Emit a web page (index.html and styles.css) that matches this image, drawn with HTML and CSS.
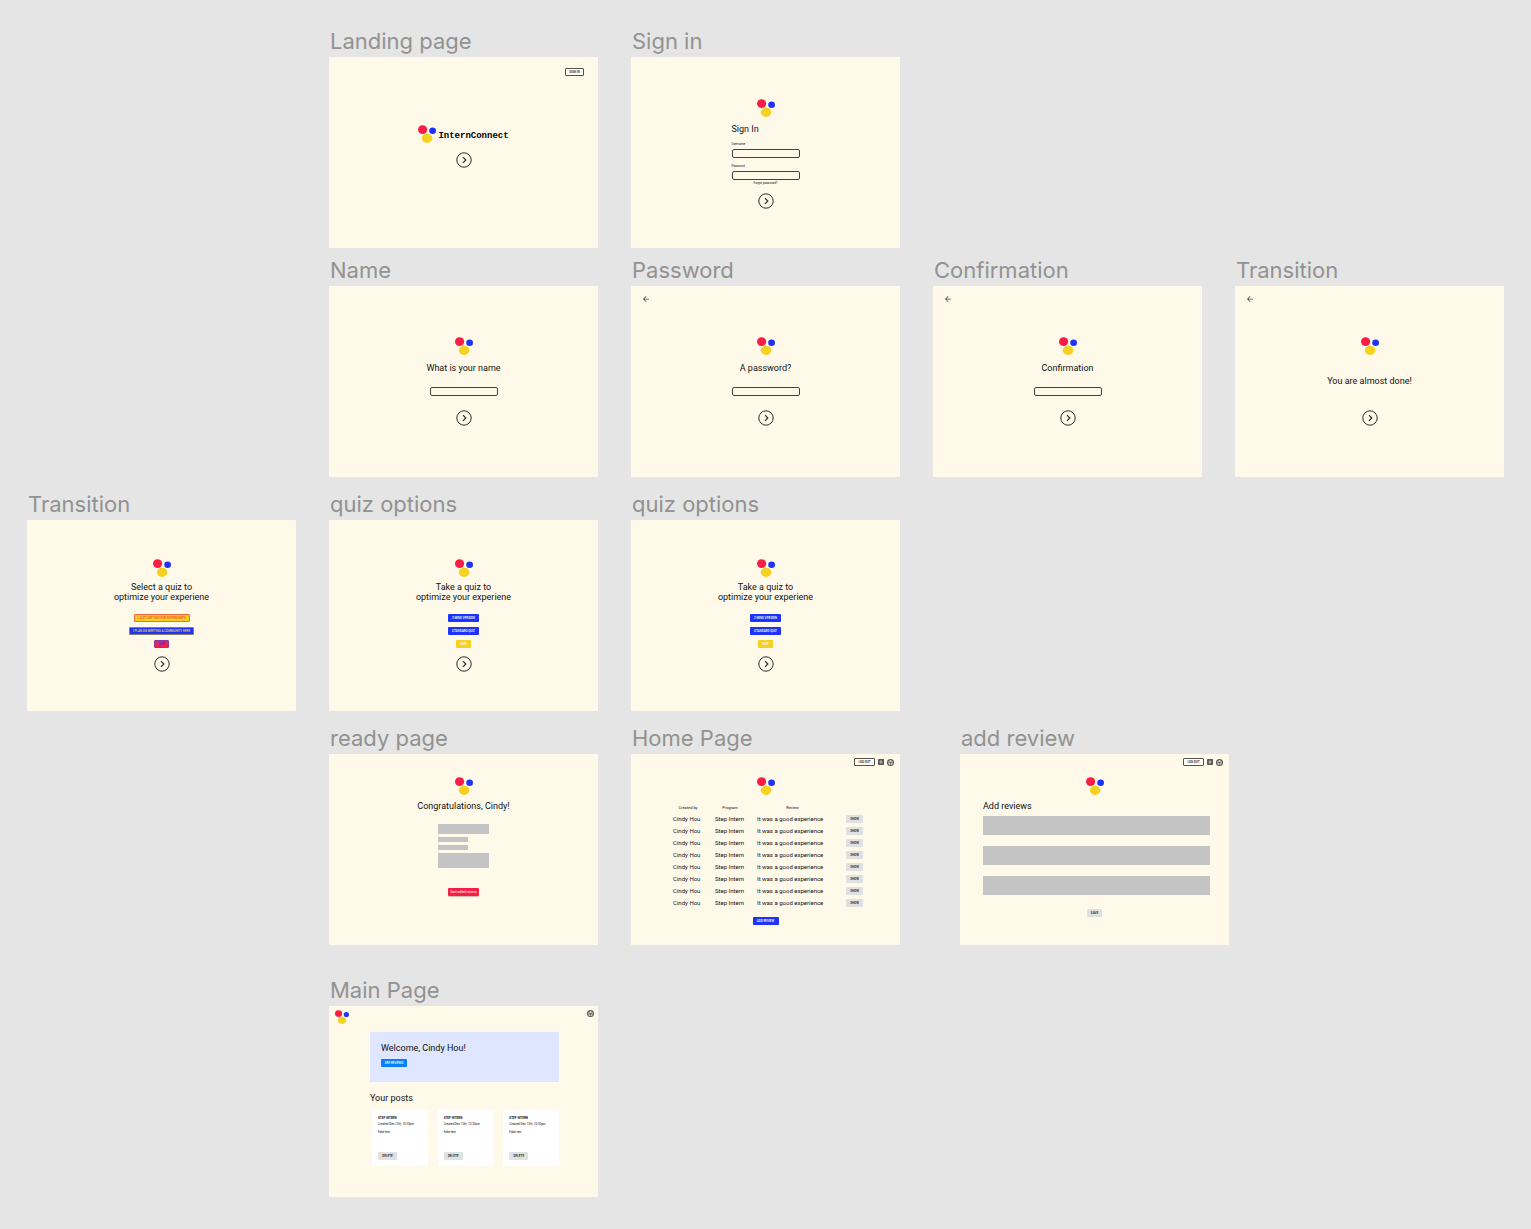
FILE: index.html
```html
<!DOCTYPE html>
<html lang="en">
<head>
<meta charset="utf-8">
<meta name="viewport" content="width=device-width, initial-scale=1">
<title>InternConnect screens</title>
<link rel="stylesheet" href="styles.css">
</head>
<body>
<svg class="sprite" aria-hidden="true">
  <symbol id="logo" viewBox="0 0 18 18">
    <ellipse cx="4.6" cy="4.6" rx="4.6" ry="4.3" fill="#f71e46"/>
    <ellipse cx="14.6" cy="5.8" rx="3.4" ry="3.3" fill="#1d33fb"/>
    <ellipse cx="9.1" cy="13.3" rx="5.3" ry="4.6" fill="#f5d121"/>
  </symbol>
  <symbol id="chevron" viewBox="0 0 16 16">
    <circle cx="8" cy="8" r="7.2" fill="none" stroke="#2e2c29" stroke-width="1"/>
    <path d="M7 5.2 9.8 8 7 10.8" fill="none" stroke="#2e2c29" stroke-width="1.2"/>
  </symbol>
  <symbol id="back" viewBox="4 4 16 16">
    <path d="M20 11H7.83l5.59-5.59L12 4l-8 8 8 8 1.41-1.41L7.83 13H20z" fill="#4a4844"/>
  </symbol>
  <symbol id="add" viewBox="3 3 18 18">
    <path d="M19 3H5a2 2 0 0 0-2 2v14a2 2 0 0 0 2 2h14a2 2 0 0 0 2-2V5a2 2 0 0 0-2-2zm-2 10h-4v4h-2v-4H7v-2h4V7h2v4h4z" fill="#5b5954"/>
  </symbol>
  <symbol id="account" viewBox="2 2 20 20">
    <path fill-rule="evenodd" d="M12 2a10 10 0 1 0 0 20 10 10 0 0 0 0-20zM7.500 8.500a2 2 0 1 1 0 4 2 2 0 0 1 0-4zm9 0a2 2 0 1 1 0 4 2 2 0 0 1 0-4zM12 5a2.500 2.500 0 1 1 0 5 2.500 2.500 0 0 1 0-5zM5 14.500h6v4.500a7.500 7.500 0 0 1-6-4.500zm8 0h6a7.500 7.500 0 0 1-6 4.500z" fill="#5b5954"/>
  </symbol>
</svg>

<main class="canvas">
  <section class="frame frame-landing">
    <h2 class="frame-title">Landing page</h2>
    <div class="screen">
      <header class="topbar topbar-landing"><button class="btn outline w-signin">SIGN IN</button></header>
      <div class="brand"><svg class="logo"><use href="#logo"/></svg><span class="wordmark">InternConnect</span></div>
      <button class="next next-landing" aria-label="Next"><svg><use href="#chevron"/></svg></button>
    </div>
  </section>

  <section class="frame frame-signin">
    <h2 class="frame-title">Sign in</h2>
    <div class="screen signin">
      <svg class="logo"><use href="#logo"/></svg>
      <form class="signin-form">
        <h3 class="heading">Sign In</h3>
        <label class="label" for="user">Username</label>
        <input class="field" id="user" type="text">
        <label class="label" for="pass">Password</label>
        <input class="field" id="pass" type="password">
        <a class="forgot" href="#">Forgot password?</a>
      </form>
      <button class="next next-signin" aria-label="Next"><svg><use href="#chevron"/></svg></button>
    </div>
  </section>

  <section class="frame frame-name">
    <h2 class="frame-title">Name</h2>
    <div class="screen">
      <header class="topbar"></header>
      <svg class="logo"><use href="#logo"/></svg>
      <label class="heading question" for="name">What is your name</label>
      <input class="field" id="name" type="text">
      <button class="next next-step" aria-label="Next"><svg><use href="#chevron"/></svg></button>
    </div>
  </section>

  <section class="frame frame-password">
    <h2 class="frame-title">Password</h2>
    <div class="screen">
      <header class="topbar"><button class="back" aria-label="Back"><svg><use href="#back"/></svg></button></header>
      <svg class="logo"><use href="#logo"/></svg>
      <label class="heading question" for="newpass">A password?</label>
      <input class="field" id="newpass" type="password">
      <button class="next next-step" aria-label="Next"><svg><use href="#chevron"/></svg></button>
    </div>
  </section>

  <section class="frame frame-confirm">
    <h2 class="frame-title">Confirmation</h2>
    <div class="screen">
      <header class="topbar"><button class="back" aria-label="Back"><svg><use href="#back"/></svg></button></header>
      <svg class="logo"><use href="#logo"/></svg>
      <label class="heading question" for="confirm">Confirmation</label>
      <input class="field" id="confirm" type="password">
      <button class="next next-step" aria-label="Next"><svg><use href="#chevron"/></svg></button>
    </div>
  </section>

  <section class="frame frame-almost">
    <h2 class="frame-title">Transition</h2>
    <div class="screen">
      <header class="topbar"><button class="back" aria-label="Back"><svg><use href="#back"/></svg></button></header>
      <svg class="logo"><use href="#logo"/></svg>
      <h3 class="heading almost">You are almost done!</h3>
      <button class="next" aria-label="Next"><svg><use href="#chevron"/></svg></button>
    </div>
  </section>

  <section class="frame frame-select">
    <h2 class="frame-title">Transition</h2>
    <div class="screen quiz">
      <svg class="logo"><use href="#logo"/></svg>
      <h3 class="heading">Select a quiz to<br>optimize your experiene</h3>
      <div class="choices">
        <button class="btn gold w-intern">I JUST USE THIS FOR INTERNSHIPS</button>
        <button class="btn navy w-community">I PLAN ON MEETING A COMMUNITY HERE</button>
        <button class="btn crimson w-skip">SKIP</button>
      </div>
      <button class="next" aria-label="Next"><svg><use href="#chevron"/></svg></button>
    </div>
  </section>

  <section class="frame frame-quiz-a">
    <h2 class="frame-title">quiz options</h2>
    <div class="screen quiz">
      <svg class="logo"><use href="#logo"/></svg>
      <h3 class="heading">Take a quiz to<br>optimize your experiene</h3>
      <div class="choices">
        <button class="btn blue w-quiz">2 MINS VERSION</button>
        <button class="btn blue w-quiz">STANDARD QUIZ</button>
        <button class="btn yellow w-skip">SKIP</button>
      </div>
      <button class="next" aria-label="Next"><svg><use href="#chevron"/></svg></button>
    </div>
  </section>

  <section class="frame frame-quiz-b">
    <h2 class="frame-title">quiz options</h2>
    <div class="screen quiz">
      <svg class="logo"><use href="#logo"/></svg>
      <h3 class="heading">Take a quiz to<br>optimize your experiene</h3>
      <div class="choices">
        <button class="btn blue w-quiz">2 MINS VERSION</button>
        <button class="btn blue w-quiz">STANDARD QUIZ</button>
        <button class="btn yellow w-skip">SKIP</button>
      </div>
      <button class="next" aria-label="Next"><svg><use href="#chevron"/></svg></button>
    </div>
  </section>

  <section class="frame frame-ready">
    <h2 class="frame-title">ready page</h2>
    <div class="screen ready">
      <svg class="logo"><use href="#logo"/></svg>
      <h3 class="heading">Congratulations, Cindy!</h3>
      <div class="summary">
        <div class="block block-head"></div>
        <div class="block block-line"></div>
        <div class="block block-line"></div>
        <div class="block block-body"></div>
      </div>
      <button class="btn red w-quiz">Start added reviews</button>
    </div>
  </section>

  <section class="frame frame-home">
    <h2 class="frame-title">Home Page</h2>
    <div class="screen home">
      <header class="topbar topbar-user">
        <button class="btn outline w-logout">LOG OUT</button>
        <button class="icon icon-add" aria-label="Add"><svg><use href="#add"/></svg></button>
        <button class="icon" aria-label="Account"><svg><use href="#account"/></svg></button>
      </header>
      <svg class="logo"><use href="#logo"/></svg>
      <table class="reviews">
        <thead><tr><th>Created by</th><th>Program</th><th>Review</th><td></td></tr></thead>
        <tbody>
          <tr><td>Cindy Hou</td><td>Step Intern</td><td>It was a good experience</td><td><button class="btn gray w-show">SHOW</button></td></tr>
          <tr><td>Cindy Hou</td><td>Step Intern</td><td>It was a good experience</td><td><button class="btn gray w-show">SHOW</button></td></tr>
          <tr><td>Cindy Hou</td><td>Step Intern</td><td>It was a good experience</td><td><button class="btn gray w-show">SHOW</button></td></tr>
          <tr><td>Cindy Hou</td><td>Step Intern</td><td>It was a good experience</td><td><button class="btn gray w-show">SHOW</button></td></tr>
          <tr><td>Cindy Hou</td><td>Step Intern</td><td>It was a good experience</td><td><button class="btn gray w-show">SHOW</button></td></tr>
          <tr><td>Cindy Hou</td><td>Step Intern</td><td>It was a good experience</td><td><button class="btn gray w-show">SHOW</button></td></tr>
          <tr><td>Cindy Hou</td><td>Step Intern</td><td>It was a good experience</td><td><button class="btn gray w-show">SHOW</button></td></tr>
          <tr><td>Cindy Hou</td><td>Step Intern</td><td>It was a good experience</td><td><button class="btn gray w-show">SHOW</button></td></tr>
        </tbody>
      </table>
      <button class="btn blue w-action">ADD REVIEW</button>
    </div>
  </section>

  <section class="frame frame-add">
    <h2 class="frame-title">add review</h2>
    <div class="screen">
      <header class="topbar topbar-user">
        <button class="btn outline w-logout">LOG OUT</button>
        <button class="icon icon-add" aria-label="Add"><svg><use href="#add"/></svg></button>
        <button class="icon" aria-label="Account"><svg><use href="#account"/></svg></button>
      </header>
      <svg class="logo"><use href="#logo"/></svg>
      <form class="review-form">
        <h3 class="heading">Add reviews</h3>
        <textarea class="block area" aria-label="Program"></textarea>
        <textarea class="block area" aria-label="Experience"></textarea>
        <textarea class="block area" aria-label="Review"></textarea>
      </form>
      <button class="btn gray w-skip">SAVE</button>
    </div>
  </section>

  <section class="frame frame-main">
    <h2 class="frame-title">Main Page</h2>
    <div class="screen">
      <header class="topbar topbar-main">
        <svg class="logo logo-small"><use href="#logo"/></svg>
        <button class="icon" aria-label="Account"><svg><use href="#account"/></svg></button>
      </header>
      <div class="dashboard">
        <div class="banner">
          <h3 class="heading">Welcome, Cindy Hou!</h3>
          <button class="btn azure w-action">SEE REVIEWS</button>
        </div>
        <h3 class="heading posts-title">Your posts</h3>
        <div class="posts">
          <article class="post"><h4>STEP INTERN</h4><p>Created Dec 13th, 10:30pm</p><p class="note">Fake text</p><button class="btn gray w-delete">DELETE</button></article>
          <article class="post"><h4>STEP INTERN</h4><p>Created Dec 13th, 10:30pm</p><p class="note">Fake text</p><button class="btn gray w-delete">DELETE</button></article>
          <article class="post"><h4>STEP INTERN</h4><p>Created Dec 13th, 10:30pm</p><p class="note">Fake text</p><button class="btn gray w-delete">DELETE</button></article>
        </div>
      </div>
    </div>
  </section>
</main>
</body>
</html>
```
FILE: styles.css
```css
* { box-sizing: border-box; }
body { margin: 0; background: #e5e5e5; font-family: Roboto, "Liberation Sans", sans-serif; color: #111; }
h2, h3, h4, p { margin: 0; font-weight: 400; }
button { border: 0; padding: 0; background: none; color: inherit; font-family: inherit; cursor: pointer; }
svg { display: block; }
.sprite { display: none; }

/* Free canvas: each frame is pinned at its own place */
.canvas { position: relative; min-height: 100vh; }
.frame { position: absolute; width: 269px; }
.frame-title { height: 32px; padding-left: 1px; line-height: 32px; font-family: Inter, sans-serif; font-size: 22px; color: #929292; white-space: nowrap; }
.frame-landing { left: 329px; top: 25px; }
.frame-signin { left: 631px; top: 25px; }
.frame-name { left: 329px; top: 254px; }
.frame-password { left: 631px; top: 254px; }
.frame-confirm { left: 933px; top: 254px; }
.frame-almost { left: 1235px; top: 254px; }
.frame-select { left: 27px; top: 488px; }
.frame-quiz-a { left: 329px; top: 488px; }
.frame-quiz-b { left: 631px; top: 488px; }
.frame-ready { left: 329px; top: 722px; }
.frame-home { left: 631px; top: 722px; }
.frame-add { left: 960px; top: 722px; }
.frame-main { left: 329px; top: 974px; }

.screen { display: flex; flex-direction: column; align-items: center; min-height: 191px; background: #fff9e9; }
.logo { width: 18px; height: 18px; flex: none; }
.heading { font-size: 9px; line-height: 10px; text-align: center; white-space: nowrap; }

/* Top bars */
.topbar { display: flex; align-items: center; align-self: stretch; height: 26px; margin-bottom: 25px; padding: 0 12px; }
.topbar-landing { height: 30px; margin-bottom: 38px; padding: 0 14px; justify-content: flex-end; }
.topbar-user { height: 16px; margin-bottom: 7px; padding: 0 6px; gap: 3px; justify-content: flex-end; }
.topbar-main { height: 26px; margin-bottom: 0; padding: 4px 4px 4px 6px; justify-content: space-between; align-items: flex-start; }
.back svg, .icon-add svg { width: 6px; height: 6px; }
.icon:not(.icon-add) svg { width: 7px; height: 7px; }
.logo-small { width: 14px; height: 14px; }

/* Controls */
.btn { display: flex; align-items: center; justify-content: center; height: 8px; border-radius: 1px; font-size: 3px; line-height: 4px; font-weight: 500; white-space: nowrap; }
.outline { border: 1px solid #55524d; background: #fffdf5; }
.blue { background: #1d33fb; color: #fff; }
.navy { background: #1d33fb; color: #f5d121; border: 1px solid #8a7f6a; }
.gold { background: #f5d121; color: #f7463c; border: 1px solid #f7663c; }
.crimson { background: #f71e46; color: #1d33fb; border: 1px solid #8a3a9a; }
.yellow { background: #f5d121; color: #fff; }
.red { background: #f71e46; color: #fff; font-weight: 400; box-shadow: 0 1px 1px #c9b9a9; }
.gray { background: #e0e0e0; }
.azure { background: #087fff; color: #fff; }
.w-signin, .w-delete { width: 19px; }
.w-logout { width: 21px; }
.w-skip { width: 15px; }
.w-show { width: 17px; }
.w-quiz { width: 31px; }
.w-action { width: 26px; }
.w-intern { width: 56px; }
.w-community { width: 65px; }

.field { width: 68px; height: 9px; padding: 0 2px; border: 1px solid #45423e; border-radius: 2px; background: transparent; font-size: 4px; }
.next svg { width: 16px; height: 16px; }

/* Landing */
.brand { display: flex; align-items: center; gap: 2px; }
.wordmark { padding-top: 4px; font: 700 9px/10px "Liberation Mono", monospace; color: #000; }
.next-landing { margin-top: 9px; }

/* Sign in */
.signin { padding-top: 42px; }
.signin-form { display: flex; flex-direction: column; width: 68px; margin-top: 7px; }
.signin-form .heading { margin-bottom: 2px; text-align: left; }
.label { margin: 6px 0 3px; font-size: 3px; line-height: 4px; }
.forgot { font-size: 3px; line-height: 4px; text-align: center; color: inherit; text-decoration: none; margin-top: 1px; }
.next-signin { margin-top: 8px; }

/* Question steps */
.question { margin: 8px 0 14px; }
.next-step { margin-top: 14px; }
.almost { margin: 21px 0 24px; }

/* Quiz */
.quiz { padding-top: 39px; }
.quiz .heading { margin-top: 5px; }
.choices { display: flex; flex-direction: column; align-items: center; gap: 5px; margin: 12px 0 8px; }

/* Ready */
.ready { padding-top: 23px; }
.ready .heading { margin-top: 6px; }
.block { background: #c4c4c4; }
.summary { display: flex; flex-direction: column; gap: 3px; width: 51px; margin: 13px 0 20px; }
.block-head { height: 10px; }
.block-line { width: 30px; height: 5px; }
.block-body { height: 15px; }

/* Home */
.reviews { align-self: flex-start; width: 190px; margin: 7px 0 8px 42px; border-collapse: collapse; table-layout: fixed; font-size: 6px; line-height: 8px; white-space: nowrap; }
.reviews th { height: 11px; font-size: 4px; font-weight: 400; }
.reviews td { height: 12px; }
.reviews thead td { height: 11px; }
.reviews th, .reviews td { padding: 0 12px 0 0; }
.reviews th:nth-child(1) { width: 42px; }
.reviews th:nth-child(2) { width: 42px; }
.reviews th:nth-child(3) { width: 89px; }
.reviews td:nth-child(3), .reviews th:nth-child(3) { padding-right: 18px; }
.reviews td:last-child { padding: 0; }

/* Add review */
.review-form { display: flex; flex-direction: column; align-self: stretch; gap: 11px; margin: 6px 19px 14px 23px; }
.review-form .heading { text-align: left; margin-bottom: -6px; }
.area { display: block; height: 19px; border: 0; resize: none; }

/* Main page */
.dashboard { align-self: stretch; margin: 0 39px 0 41px; }
.banner { height: 50px; padding: 11px; background: #dfe6ff; }
.banner .heading, .posts-title { text-align: left; }
.banner .btn { margin-top: 6px; }
.posts-title { margin: 11px 0 7px; }
.posts { display: grid; grid-template-columns: repeat(3, 1fr); gap: 10px; padding-left: 2px; }
.post { display: flex; flex-direction: column; height: 56px; padding: 6px; background: #fff; font-size: 3px; line-height: 4px; white-space: nowrap; }
.post h4 { font-weight: 700; margin-bottom: 2px; }
.note { margin-top: 4px; }
.post .btn { margin-top: auto; }
```
